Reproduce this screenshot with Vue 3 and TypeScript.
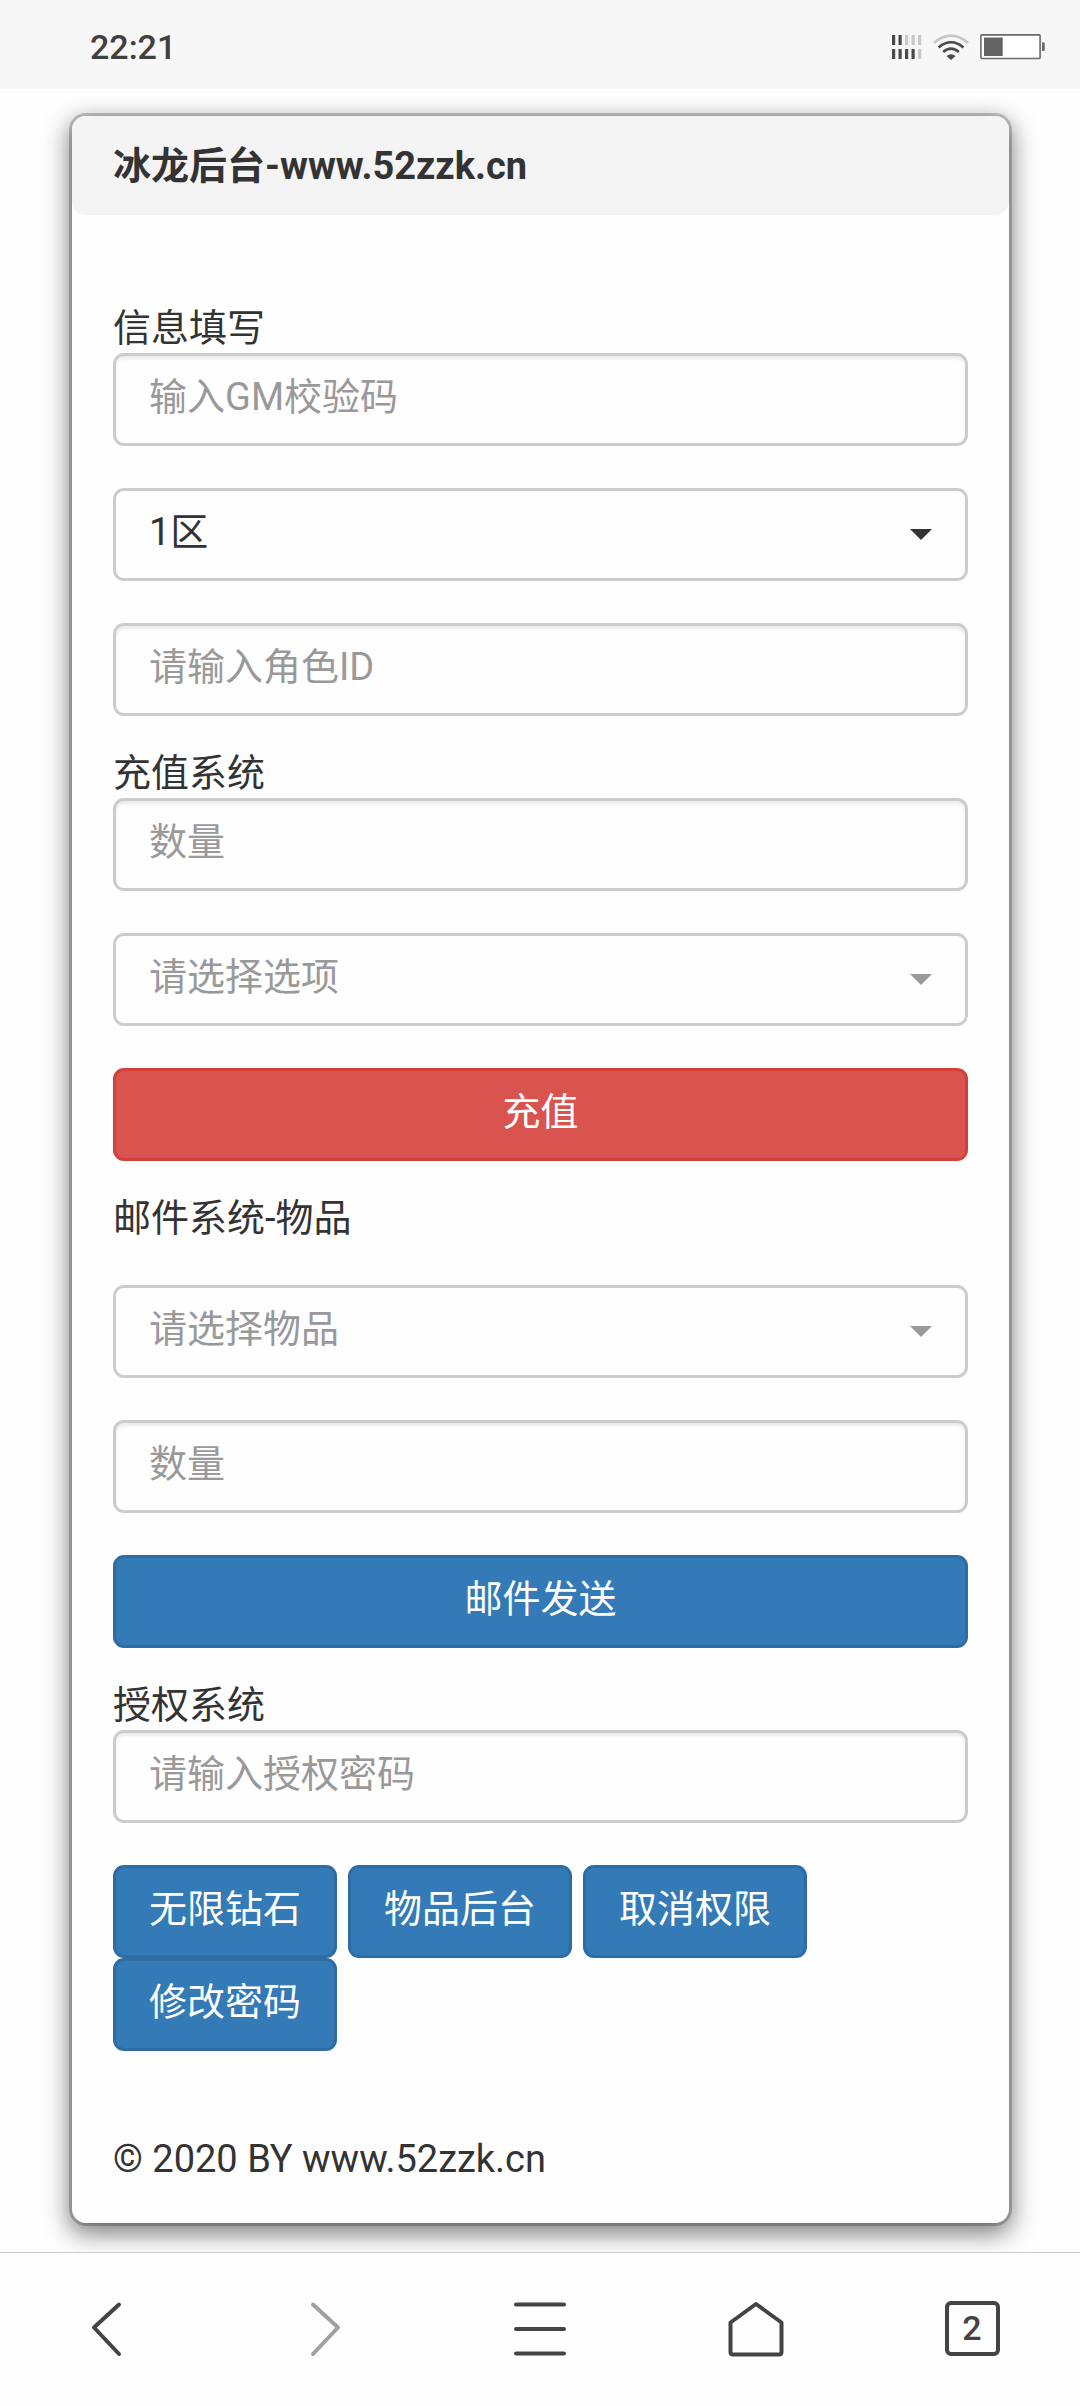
<script setup lang="ts">
import { ref } from 'vue'

interface Option {
  value: string
  text: string
}

const time = '22:21'
const site = 'www.52zzk.cn'

const zones: Option[] = [{ value: '1', text: '1区' }]
const chargeOptions: Option[] = [{ value: '', text: '请选择选项' }]
const itemOptions: Option[] = [{ value: '', text: '请选择物品' }]
const authActions: string[] = ['无限钻石', '物品后台', '取消权限', '修改密码']

const gmCode = ref('')
const zone = ref('1')
const roleId = ref('')
const chargeAmount = ref('')
const chargeType = ref('')
const mailItem = ref('')
const mailAmount = ref('')
const authPassword = ref('')

const upperSignal = [true, true, false, false, false]
const lowerSignal = [true, true, true, true, false]
</script>

<template>
  <div class="screen">
    <header class="status">
      <span class="clock">{{ time }}</span>
      <div class="indicators">
        <svg class="signal" viewBox="0 0 30 26" aria-hidden="true">
          <rect v-for="(on, i) in upperSignal" :key="'u' + i" :x="i * 6.5" y="1" width="3.2" height="10" :fill="on ? '#4a4a4a' : '#c8c8c8'" />
          <rect v-for="(on, i) in lowerSignal" :key="'l' + i" :x="i * 6.5" y="15" width="3.2" height="10" :fill="on ? '#4a4a4a' : '#c8c8c8'" />
        </svg>
        <svg class="wifi" viewBox="0 0 36 26" fill="none" stroke-width="2.6" aria-hidden="true">
          <path d="M1 9 Q9 1.6 18 1.6 T35 9" stroke="#c8c8c8" />
          <path d="M5.6 13.4 Q11.5 8.2 18 8.2 T30.4 13.4" stroke="#4a4a4a" />
          <path d="M10.2 18 Q14 14.6 18 14.6 T25.8 18" stroke="#4a4a4a" />
          <path d="M13.4 22 Q18 18.4 22.6 22 L18 26 Z" fill="#4a4a4a" />
        </svg>
        <svg class="battery" viewBox="0 0 65 26" aria-hidden="true">
          <rect x="0.9" y="0.9" width="59.2" height="23.6" rx="1" fill="#fff" stroke="#6a6a6a" stroke-width="1.6" />
          <rect x="4" y="3.5" width="18.7" height="18.5" fill="#646464" />
          <path d="M62 8.3 h1.2 a1.6 1.6 0 0 1 1.6 1.6 v5.6 a1.6 1.6 0 0 1 -1.6 1.6 h-1.2 z" fill="#6a6a6a" />
        </svg>
      </div>
    </header>

    <main class="page">
      <div class="card">
        <h1 class="title">冰龙后台-{{ site }}</h1>

        <form class="form" @submit.prevent>
          <section>
            <label class="caption" for="gm-code">信息填写</label>
            <div class="fields">
              <input id="gm-code" v-model="gmCode" class="control" type="text" placeholder="输入GM校验码" />
              <div class="picker">
                <select v-model="zone" class="control" aria-label="区服">
                  <option v-for="o in zones" :key="o.value" :value="o.value">{{ o.text }}</option>
                </select>
                <svg class="caret" viewBox="0 0 22 11" aria-hidden="true"><path d="M0 0h22L11 11z" /></svg>
              </div>
              <input v-model="roleId" class="control" type="text" placeholder="请输入角色ID" aria-label="角色ID" />
            </div>
          </section>

          <section>
            <label class="caption" for="charge-amount">充值系统</label>
            <div class="fields">
              <input id="charge-amount" v-model="chargeAmount" class="control" type="text" placeholder="数量" />
              <div class="picker empty">
                <select v-model="chargeType" class="control" aria-label="充值选项">
                  <option v-for="o in chargeOptions" :key="o.value" :value="o.value">{{ o.text }}</option>
                </select>
                <svg class="caret" viewBox="0 0 22 11" aria-hidden="true"><path d="M0 0h22L11 11z" /></svg>
              </div>
              <button class="btn danger" type="button">充值</button>
            </div>
          </section>

          <section>
            <label class="caption spaced" for="mail-item">邮件系统-物品</label>
            <div class="fields">
              <div class="picker empty">
                <select id="mail-item" v-model="mailItem" class="control">
                  <option v-for="o in itemOptions" :key="o.value" :value="o.value">{{ o.text }}</option>
                </select>
                <svg class="caret" viewBox="0 0 22 11" aria-hidden="true"><path d="M0 0h22L11 11z" /></svg>
              </div>
              <input v-model="mailAmount" class="control" type="text" placeholder="数量" aria-label="物品数量" />
              <button class="btn" type="button">邮件发送</button>
            </div>
          </section>

          <section>
            <label class="caption" for="auth-password">授权系统</label>
            <div class="fields">
              <input id="auth-password" v-model="authPassword" class="control" type="text" placeholder="请输入授权密码" />
              <div class="actions">
                <button v-for="name in authActions" :key="name" class="btn" type="button">{{ name }}</button>
              </div>
            </div>
          </section>
        </form>

        <footer class="copyright">© 2020 BY {{ site }}</footer>
      </div>
    </main>

    <nav class="toolbar">
      <button type="button" aria-label="后退">
        <svg class="glyph" viewBox="0 0 56 56"><path d="M39 3.5 14 26.5 39 53" /></svg>
      </button>
      <button type="button" class="dim" aria-label="前进">
        <svg class="glyph" viewBox="0 0 56 56"><path d="M17 3.5 42 26.5 17 53" /></svg>
      </button>
      <button type="button" aria-label="菜单">
        <svg class="glyph" viewBox="0 0 56 56"><path d="M4 3.5H52M4 28H52M4 52.5H52" /></svg>
      </button>
      <button type="button" aria-label="主页">
        <svg class="glyph" viewBox="0 0 56 56"><path d="M28 3 53.5 21.5V51Q53.5 53.5 51 53.5H5Q2.5 53.5 2.5 51V21.5Z" /></svg>
      </button>
      <button type="button" aria-label="标签页">
        <span class="tabs">2</span>
      </button>
    </nav>
  </div>
</template>

<style>
body {
  margin: 0;
  background: #fefefe;
}
</style>

<style scoped>
.screen {
  display: flex;
  flex-direction: column;
  min-height: 100vh;
  color: #333;
  font-family: Roboto, 'Noto Sans CJK SC', sans-serif;
  font-size: 38px;
  line-height: 50px;
}

.status {
  display: flex;
  align-items: center;
  justify-content: space-between;
  box-sizing: border-box;
  height: 89px;
  padding: 5px 35px 0 90px;
  background: #f7f7f7;
}

.clock {
  color: #404040;
  font-size: 34px;
  font-weight: 500;
}

.indicators {
  display: flex;
  align-items: center;
  gap: 11px;
}

.signal {
  width: 30px;
  height: 26px;
}

.wifi {
  width: 36px;
  height: 26px;
}

.battery {
  width: 65px;
  height: 26px;
}

.page {
  flex: 1;
  padding: 27px 71px 29px 72px;
}

.card {
  border-radius: 14px;
  background: #fefefe;
  box-shadow:
    0 0 0 3px rgba(0, 0, 0, 0.2),
    0 8px 25px 3px rgba(0, 0, 0, 0.5);
}

.title {
  margin: 0;
  padding: 25px 41px 24px;
  border-radius: 14px;
  background: #f4f4f4;
  font-size: 38px;
  font-weight: 700;
  line-height: 50px;
}

.form {
  padding: 88px 41px 0;
}

section + section {
  margin-top: 32px;
}

.caption {
  display: block;
}

.spaced {
  margin-bottom: 42px;
}

.fields {
  display: flex;
  flex-direction: column;
  gap: 42px;
}

.control,
.btn {
  box-sizing: border-box;
  height: 93px;
  margin: 0;
  padding: 0 33px 5px;
  border: 3px solid #ccc;
  border-radius: 11px;
  font: inherit;
  outline: none;
}

.control {
  width: 100%;
  background: #fefefe;
  color: #333;
  appearance: none;
}

input.control {
  box-shadow: inset 0 3px 3px rgba(0, 0, 0, 0.075);
}

.control::placeholder {
  color: #999;
  opacity: 1;
}

.picker {
  position: relative;
  display: flex;
}

.caret {
  position: absolute;
  top: 41px;
  right: 36px;
  width: 22px;
  height: 11px;
  fill: #333;
  pointer-events: none;
}

.empty .control {
  color: #999;
}

.empty .caret {
  fill: #999;
}

.btn {
  border-color: #2e6da4;
  background: #337ab7;
  color: #fff;
  text-align: center;
}

.danger {
  border-color: #d43f3a;
  background: #d9534f;
}

.actions {
  display: flex;
  flex-wrap: wrap;
  column-gap: 11px;
  max-width: 800px;
}

.copyright {
  padding: 83px 41px 39px;
}

.toolbar {
  position: relative;
  display: flex;
  box-sizing: border-box;
  height: 154px;
  padding-bottom: 2px;
  border-top: 1px solid #ccc;
  background: #fefefe;
}

.toolbar button {
  display: flex;
  flex: 1;
  align-items: center;
  justify-content: center;
  padding: 0;
  border: 0;
  background: none;
  color: #444;
  font: inherit;
}

.toolbar .dim {
  color: #a0a0a0;
}

.glyph {
  width: 56px;
  height: 56px;
  fill: none;
  stroke: currentColor;
  stroke-width: 4;
  stroke-linecap: round;
  stroke-linejoin: round;
}

.tabs {
  box-sizing: border-box;
  width: 55px;
  height: 55px;
  border: 4px solid #444;
  border-radius: 6px;
  font-size: 34px;
  font-weight: 500;
  line-height: 47px;
}
</style>
